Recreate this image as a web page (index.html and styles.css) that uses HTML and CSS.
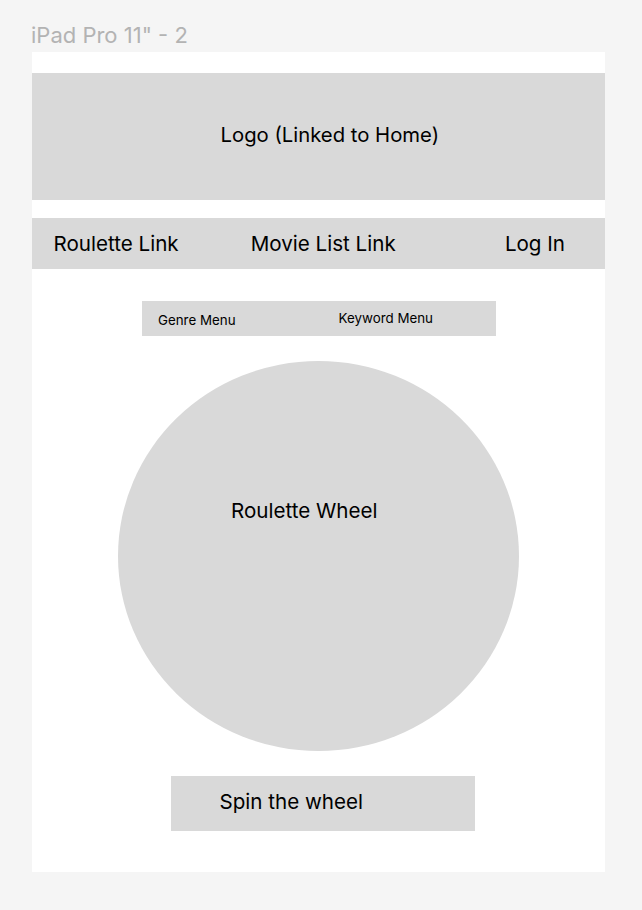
FILE: index.html
```html
<!DOCTYPE html>
<html>
<head>
<meta charset="utf-8">
<link rel="stylesheet" href="styles.css">
</head>
<body>
<div class="title">iPad Pro 11" - 2</div>
<div class="frame">
  <div class="logo">Logo (Linked to Home)</div>
  <nav class="nav">
    <span class="nav-roulette">Roulette Link</span>
    <span class="nav-movie">Movie List Link</span>
    <span class="nav-login">Log In</span>
  </nav>
  <div class="menus">
    <span class="menu-genre">Genre Menu</span>
    <span class="menu-keyword">Keyword Menu</span>
  </div>
  <div class="wheel">Roulette Wheel</div>
  <div class="spin">Spin the wheel</div>
</div>
</body>
</html>
```
FILE: styles.css
```css
html, body {
  margin: 0;
  padding: 0;
  background: #f5f5f5;
  font-family: Inter, "Noto Sans", sans-serif;
  color: #000;
}
.title {
  height: 52px;
  box-sizing: border-box;
  padding: 23px 0 0 31px;
  font-size: 22px;
  line-height: 24px;
  color: #b3b3b3;
}
.frame {
  margin-left: 32px;
  width: 573px;
  height: 820px;
  box-sizing: border-box;
  background: #fff;
  padding-top: 21px;
  display: flex;
  flex-direction: column;
  align-items: flex-start;
  font-size: 20.6px;
  line-height: 24px;
}
.logo {
  align-self: stretch;
  height: 127px;
  box-sizing: border-box;
  background: #d9d9d9;
  padding: 49.5px 0 0 188.5px;
  font-size: 20.3px;
}
.nav {
  align-self: stretch;
  margin-top: 18px;
  height: 51px;
  background: #d9d9d9;
  display: flex;
  align-items: center;
  padding-left: 21.5px;
}
.nav-movie {
  margin-left: 72px;
}
.nav-login {
  margin-left: auto;
  margin-right: 40px;
}
.menus {
  margin: 32px 0 0 110px;
  width: 354px;
  height: 35px;
  background: #d9d9d9;
  display: flex;
  align-items: flex-start;
  font-size: 13.35px;
  line-height: 16px;
}
.menu-genre {
  padding: 11.2px 0 0 16px;
}
.menu-keyword {
  padding-top: 9.2px;
  margin-left: auto;
  margin-right: 63px;
}
.wheel {
  margin: 25px 0 0 86px;
  width: 401px;
  height: 390px;
  box-sizing: border-box;
  border-radius: 50%;
  background: #d9d9d9;
  padding: 137.5px 0 0 113px;
}
.spin {
  margin: 25px 0 0 139px;
  width: 304px;
  height: 55px;
  box-sizing: border-box;
  background: #d9d9d9;
  padding: 14px 0 0 48.5px;
}
```
